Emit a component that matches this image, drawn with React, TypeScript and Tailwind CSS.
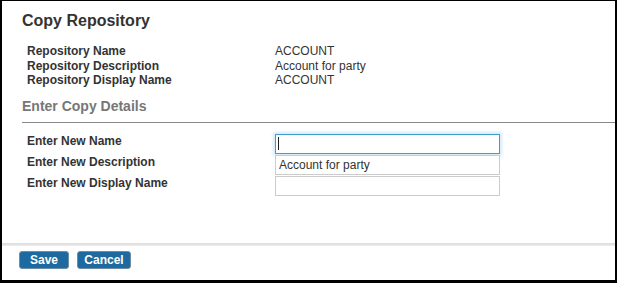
export default function App() {
  const info = [
    { label: "Repository Name", value: "ACCOUNT" },
    { label: "Repository Description", value: "Account for party" },
    { label: "Repository Display Name", value: "ACCOUNT" },
  ];

  const fields = [
    { label: "Enter New Name", value: "", focused: true },
    { label: "Enter New Description", value: "Account for party", focused: false },
    { label: "Enter New Display Name", value: "", focused: false },
  ];

  return (
    <div
      className="w-[617px] h-[283px] bg-white border-l-2 border-t border-r-2 border-b-[3px] border-black flex flex-col text-[#333]"
      style={{ fontFamily: '"Liberation Sans", Arial, sans-serif' }}
    >
      <div className="flex-1 pt-[11px] pl-[20px]">
        <h2 className="text-[16px] leading-[18px] font-bold text-[#333]">Copy Repository</h2>

        <div className="mt-[14px] pl-[5px] grid grid-cols-[248px_1fr] text-[12px] leading-[14.5px]">
          {info.map((row) => (
            <div key={row.label} className="contents">
              <div className="font-bold">{row.label}</div>
              <div>{row.value}</div>
            </div>
          ))}
        </div>

        <div className="mt-[10px] pb-2 border-b border-[#888]">
          <h3 className="text-[14px] leading-[16px] font-bold text-[#777]">Enter Copy Details</h3>
        </div>

        <div className="mt-[11px] pl-[5px] grid grid-cols-[248px_225px] gap-y-px text-[12px]">
          {fields.map((f) => (
            <div key={f.label} className="contents">
              <div className="font-bold leading-[15px] h-[20px]">{f.label}</div>
              <div className="relative h-[20px]">
                <input
                  readOnly
                  defaultValue={f.value}
                  className={
                    f.focused
                      ? "w-full h-full px-[3px] text-[12px] text-[#333] bg-white border border-[#3f9bd0] shadow-[0_0_3px_2px_#d6eaf7] outline-none"
                      : "w-full h-full px-[3px] text-[12px] text-[#333] bg-white border border-[#ccc] outline-none"
                  }
                  style={{ fontFamily: '"Liberation Sans", Arial, sans-serif' }}
                />
                {f.focused && (
                  <span className="absolute left-[3px] top-[3px] w-px h-[13px] bg-[#222]" />
                )}
              </div>
            </div>
          ))}
        </div>
      </div>

      <div className="h-[3px] bg-linear-to-b from-[#d9d9d9] to-[#eeeeee]" />

      <div className="h-[34px] pt-[5px] pl-[17px] flex items-start gap-2">
        <button className="w-[50px] h-[18px] rounded-[3px] border border-[#6f8ea6] bg-[#1c6aa0] text-white text-[12px] font-bold leading-[16px]">
          Save
        </button>
        <button className="w-[54px] h-[18px] rounded-[3px] border border-[#6f8ea6] bg-[#1c6aa0] text-white text-[12px] font-bold leading-[16px]">
          Cancel
        </button>
      </div>
    </div>
  );
}
